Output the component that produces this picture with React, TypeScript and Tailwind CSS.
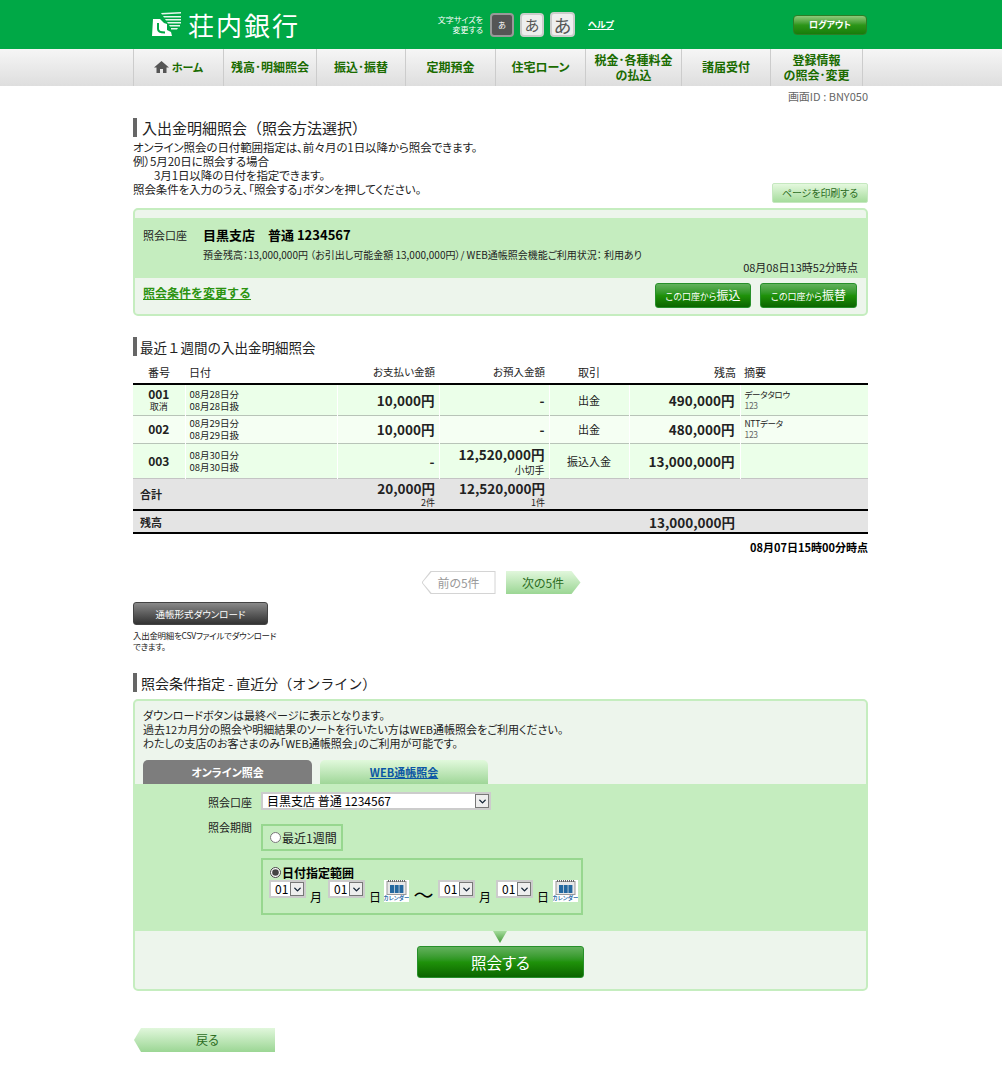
import { ReactNode } from "react";
import { ChevronDown } from "lucide-react";

const navItems = [
  { label: "残高･明細照会", w: "w-[93px]" },
  { label: "振込･振替", w: "w-[89px]" },
  { label: "定期預金", w: "w-[90px]" },
  { label: "住宅ローン", w: "w-[90px]" },
  { label: "税金･各種料金\nの払込", w: "w-[96px]" },
  { label: "諸届受付", w: "w-[89px]" },
  { label: "登録情報\nの照会･変更", w: "w-[92px]" },
];

const cellLine = "border-r border-white";

function Logo() {
  return (
    <svg width="30" height="25" viewBox="0 0 30 25" className="shrink-0">
      <path d="M9 1l20-1v1.5L10 2.5zM11 4h18v1.5H12zM13 7h16v1.5H14zM15 10h14v1.5H16zM17 13h11v1.5H18zM19 16h7l-1 1.5h-6z" fill="#fff" opacity="0.9" />
      <path d="M1 7h7l4 4 3 1v6l4 2 1 4H0z" fill="#fff" />
      <path d="M6 11v6c0 3 3 3.5 7 3.5" fill="none" stroke="#00a846" strokeWidth="2" />
    </svg>
  );
}

function HomeIcon() {
  return (
    <svg width="15" height="12" viewBox="0 0 15 12" className="shrink-0">
      <path d="M7.5 0L15 6.5H12.5V12H9V8H6V12H2.5V6.5H0Z" fill="#555" />
    </svg>
  );
}

function Heading({ children, size }: { children: ReactNode; size: string }) {
  return (
    <div className={`flex h-[19px] items-center border-l-[4px] border-[#666] ${size} text-[#222] [font-feature-settings:normal]`}>
      {children}
    </div>
  );
}

function SmallSelect() {
  return (
    <span className="flex h-[18px] w-[37px] items-center justify-between border-2 border-[#cccccc] bg-white pl-1 text-[12px] leading-none text-black">
      01
      <span className="flex h-[14px] w-[14px] items-center justify-center border border-[#777] bg-[#eeeeee]">
        <ChevronDown size={11} strokeWidth={3} className="text-[#123]" />
      </span>
    </span>
  );
}

function CalendarIcon() {
  return (
    <span className="flex h-[22px] w-[25px] flex-col items-center overflow-hidden bg-white">
      <svg width="21" height="15" viewBox="0 0 21 15" className="shrink-0">
        <rect x="1" y="1.5" width="19" height="13" fill="#e8e8e8" stroke="#999" />
        <path d="M2 1h17" stroke="#666" strokeWidth="2" strokeDasharray="1 1" />
        <rect x="4" y="5" width="4" height="8" fill="#24689f" />
        <rect x="8.7" y="5" width="4" height="8" fill="#24689f" />
        <rect x="13.4" y="5" width="4" height="8" fill="#24689f" />
      </svg>
      <span className="text-[5.5px] leading-[7px] font-bold whitespace-nowrap text-[#2b6ca8]">カレンダー</span>
    </span>
  );
}

function GreenButton({ children, className }: { children: ReactNode; className: string }) {
  return (
    <button className={`rounded-[3px] border border-[#27902a] bg-gradient-to-b from-[#62b15c] via-[#1f920a] to-[#0b6500] text-white ${className}`}>
      {children}
    </button>
  );
}

export default function App() {
  return (
    <div className="h-[1065px] w-[1002px] bg-white text-[12px] leading-[14px] text-[#222] [font-family:'Noto_Sans_CJK_JP','Liberation_Sans',sans-serif] [font-feature-settings:'palt']">
      <header className="h-[49px] bg-[#00a846]">
        <div className="ml-[133px] flex h-full w-[735px] items-center">
          <div className="ml-[19px] flex w-[281px] items-center gap-[6px] text-white">
            <Logo />
            <span className="text-[26px] leading-none tracking-[2px]">荘内銀行</span>
          </div>
          <div className="w-[50px] text-right text-[8px] leading-[10px] whitespace-nowrap text-white">
            文字サイズを<br />変更する
          </div>
          <div className="ml-[7px] flex items-center gap-[6px]">
            <span className="flex h-[24px] w-[24px] items-center justify-center rounded-[4px] border-2 border-[#999] bg-[#555] text-[8px] text-white">あ</span>
            <span className="flex h-[24px] w-[24px] items-center justify-center rounded-[4px] border-2 border-[#ccc] bg-[#eee] text-[15px] text-[#555]">あ</span>
            <span className="flex h-[25px] w-[25px] items-center justify-center rounded-[4px] border-2 border-[#ccc] bg-[#eee] text-[18px] text-[#555]">あ</span>
          </div>
          <a className="ml-[13px] text-[9px] font-bold text-white underline">ヘルプ</a>
          <button className="mr-[1px] ml-auto h-[20px] w-[74px] rounded-[4px] border border-[#2d7d25] bg-gradient-to-b from-[#8fc97a] via-[#2c9618] to-[#167d0a] text-[9px] font-bold text-white">
            ログアウト
          </button>
        </div>
      </header>

      <nav className="h-[37px] bg-gradient-to-b from-[#f6f6f6] to-[#dedede]">
        <div className="ml-[133px] flex h-full w-[735px] border-l border-[#ccc]">
          <div className="flex w-[90px] items-center justify-center gap-[3px] border-r border-[#ccc] pb-[2px] text-[11px] font-bold text-[#1a6b00]">
            <HomeIcon />
            ホーム
          </div>
          {navItems.map((n) => (
            <div key={n.label} className={`flex ${n.w} items-center justify-center border-r border-[#ccc] pb-[2px] text-center text-[12px] leading-[15px] font-bold whitespace-pre-line text-[#1a6b00]`}>
              {n.label}
            </div>
          ))}
        </div>
      </nav>

      <main className="ml-[133px] w-[735px]">
        <p className="mt-[4px] h-[12px] text-right text-[11px] leading-[12px] text-[#666] [font-feature-settings:normal]">画面ID : BNY050</p>

        <div className="mt-[16px]">
          <Heading size="pl-[5px] text-[15px]">入出金明細照会（照会方法選択）</Heading>
        </div>

        <div className="relative mt-[3px] h-[56px] text-[11.5px] tracking-[-0.1px]">
          <p>オンライン照会の日付範囲指定は、前々月の1日以降から照会できます。</p>
          <p>例）5月20日に照会する場合</p>
          <p className="pl-[21px]">3月1日以降の日付を指定できます。</p>
          <p>照会条件を入力のうえ、「照会する」ボタンを押してください。</p>
          <button className="absolute right-0 bottom-[-7px] h-[20px] w-[96px] rounded-[2px] border border-[#c5e8bf] bg-gradient-to-b from-[#e4f8de] to-[#a5dc9c] text-[10px] text-[#2c6d1f]">
            ページを印刷する
          </button>
        </div>

        <section className="mt-[12px] h-[108px] overflow-hidden rounded-[5px] border-2 border-[#c5edbf] bg-[#edf5ec]">
          <div className="mt-[8px] h-[60px] bg-[#c5edbf] pt-[10px] pl-[8px]">
            <div className="flex items-center">
              <span className="w-[60px] text-[11px]">照会口座</span>
              <span className="text-[13px] font-bold text-black">目黒支店　普通 1234567</span>
            </div>
            <p className="mt-[7px] pl-[60px] text-[10px] leading-[12px]">預金残高：13,000,000円 （お引出し可能金額 13,000,000円）/ WEB通帳照会機能ご利用状況： 利用あり</p>
            <p className="pr-[8px] text-right text-[11px] leading-[13px]">08月08日13時52分時点</p>
          </div>
          <div className="flex items-center justify-between pr-[9px] pl-[8px]">
            <a className="text-[12px] font-bold text-[#2b9310] underline [font-feature-settings:normal]">照会条件を変更する</a>
            <div className="mt-[5px] flex gap-[9px]">
              <GreenButton className="h-[25px] w-[96px] text-[9px]">この口座から<span className="text-[12px]">振込</span></GreenButton>
              <GreenButton className="h-[25px] w-[97px] text-[9px]">この口座から<span className="text-[12px]">振替</span></GreenButton>
            </div>
          </div>
        </section>

        <div className="mt-[21px]">
          <Heading size="pl-[3px] text-[13.5px]">最近１週間の入出金明細照会</Heading>
        </div>

        <table className="mt-[6px] w-[735px] table-fixed border-collapse text-[11px]">
          <colgroup>
            <col className="w-[52px]" />
            <col className="w-[152px]" />
            <col className="w-[102px]" />
            <col className="w-[110px]" />
            <col className="w-[80px]" />
            <col className="w-[111px]" />
            <col className="w-[128px]" />
          </colgroup>
          <thead>
            <tr className="h-[22px] border-b-2 border-black">
              <th className="pb-[2px] text-center font-normal">番号</th>
              <th className="pb-[2px] pl-[4px] text-left font-normal">日付</th>
              <th className="pr-[4px] pb-[2px] text-right text-[10.5px] font-normal">お支払い金額</th>
              <th className="pr-[4px] pb-[2px] text-right text-[10.5px] font-normal">お預入金額</th>
              <th className="pb-[2px] text-center font-normal">取引</th>
              <th className="pr-[4px] pb-[2px] text-right font-normal">残高</th>
              <th className="pb-[2px] pl-[4px] text-left font-normal">摘要</th>
            </tr>
          </thead>
          <tbody>
            <tr className="h-[31px] border-b border-[#b8c4b8] bg-[#ebffe9]">
              <td className={`${cellLine} text-center`}><b className="block text-[12px] leading-[14px]">001</b><span className="block text-[9px] leading-[11px]">取消</span></td>
              <td className={`${cellLine} pl-[4px] text-[9.5px] leading-[12px]`}>08月28日分<br />08月28日扱</td>
              <td className={`${cellLine} pr-[4px] text-right text-[13.5px] font-bold`}>10,000円</td>
              <td className={`${cellLine} pr-[4px] text-right text-[13.5px] font-bold`}>-</td>
              <td className={`${cellLine} text-center`}>出金</td>
              <td className={`${cellLine} pr-[5px] text-right text-[13.5px] font-bold`}>490,000円</td>
              <td className="pl-[4px] text-[8.5px] leading-[11px] tracking-[-0.3px]">データタロウ<br /><span className="text-[#666]">123</span></td>
            </tr>
            <tr className="h-[28px] border-b border-[#b8c4b8] bg-[#f5fff3]">
              <td className={`${cellLine} text-center text-[12px] font-bold`}>002</td>
              <td className={`${cellLine} pl-[4px] text-[9.5px] leading-[12px]`}>08月29日分<br />08月29日扱</td>
              <td className={`${cellLine} pr-[4px] text-right text-[13.5px] font-bold`}>10,000円</td>
              <td className={`${cellLine} pr-[4px] text-right text-[13.5px] font-bold`}>-</td>
              <td className={`${cellLine} text-center`}>出金</td>
              <td className={`${cellLine} pr-[5px] text-right text-[13.5px] font-bold`}>480,000円</td>
              <td className="pl-[4px] text-[8.5px] leading-[11px] tracking-[-0.3px]">NTTデータ<br /><span className="text-[#666]">123</span></td>
            </tr>
            <tr className="h-[35px] border-b border-[#c4c4c4] bg-[#ebffe9]">
              <td className={`${cellLine} text-center text-[12px] font-bold`}>003</td>
              <td className={`${cellLine} pl-[4px] text-[9.5px] leading-[12px]`}>08月30日分<br />08月30日扱</td>
              <td className={`${cellLine} pr-[4px] text-right text-[13.5px] font-bold`}>-</td>
              <td className={`${cellLine} pr-[4px] text-right`}><b className="block text-[13.5px] leading-[17px]">12,520,000円</b><span className="block text-[10px] leading-[13px]">小切手</span></td>
              <td className={`${cellLine} text-center`}>振込入金</td>
              <td className={`${cellLine} pr-[5px] text-right text-[13.5px] font-bold`}>13,000,000円</td>
              <td />
            </tr>
            <tr className="h-[32px] border-b-2 border-black bg-[#e4e4e4]">
              <td className="pl-[7px] font-bold" colSpan={2}>合計</td>
              <td className="pr-[4px] text-right"><b className="block text-[13.5px] leading-[17px]">20,000円</b><span className="block text-[9px] leading-[11px]">2件</span></td>
              <td className="pr-[4px] text-right"><b className="block text-[13.5px] leading-[17px]">12,520,000円</b><span className="block text-[9px] leading-[11px]">1件</span></td>
              <td colSpan={3} />
            </tr>
            <tr className="h-[23px] border-b-2 border-black bg-[#e4e4e4]">
              <td className="pl-[7px] font-bold" colSpan={2}>残高</td>
              <td colSpan={3} />
              <td className="pr-[5px] text-right text-[13.5px] font-bold">13,000,000円</td>
              <td />
            </tr>
          </tbody>
        </table>

        <p className="mt-[6px] text-right text-[11px] font-bold text-black">08月07日15時00分時点</p>

        <div className="mt-[17px] flex justify-center gap-[10px] pl-[1px]">
          <div className="h-[23px] w-[74px] bg-[#d4d4d4] p-px [clip-path:polygon(9px_0,100%_0,100%_100%,9px_100%,0_50%)]">
            <div className="flex h-full items-center justify-center bg-white text-[12px] text-[#999] [clip-path:polygon(9px_0,100%_0,100%_100%,9px_100%,0_50%)]">前の5件</div>
          </div>
          <div className="flex h-[23px] w-[75px] items-center justify-center bg-gradient-to-b from-[#e1f7dc] to-[#9bd694] text-[12px] text-[#2c6d1f] [clip-path:polygon(0_0,calc(100%-9px)_0,100%_50%,calc(100%-9px)_100%,0_100%)]">次の5件</div>
        </div>

        <button className="mt-[8px] block h-[23px] w-[135px] rounded-[3px] border border-[#444] bg-gradient-to-b from-[#8a8a8a] to-[#333] text-[9.5px] text-white">
          通帳形式ダウンロード
        </button>
        <p className="mt-[5px] text-[8.5px] leading-[11px] tracking-[-0.3px] whitespace-nowrap">入出金明細をCSVファイルでダウンロード<br />できます。</p>

        <div className="mt-[21px]">
          <Heading size="pl-[4px] text-[14px]">照会条件指定 - 直近分（オンライン）</Heading>
        </div>

        <section className="mt-[7px] h-[292px] overflow-hidden rounded-[5px] border-2 border-[#c5edbf] bg-[#edf5ec]">
          <div className="px-[8px] pt-[7px] text-[11px]">
            <p>ダウンロードボタンは最終ページに表示となります。</p>
            <p>過去12カ月分の照会や明細結果のソートを行いたい方はWEB通帳照会をご利用ください。</p>
            <p>わたしの支店のお客さまのみ「WEB通帳照会」のご利用が可能です。</p>
          </div>
          <div className="mt-[10px] flex gap-[8px] px-[8px]">
            <div className="flex h-[24px] w-[169px] items-center justify-center rounded-t-[5px] bg-[#7d7d7d] text-[11px] font-bold text-white">オンライン照会</div>
            <div className="flex h-[24px] w-[168px] items-center justify-center rounded-t-[5px] bg-gradient-to-b from-[#e1f9dc] to-[#9fd698] text-[11px] font-bold text-[#0b56a5] underline">WEB通帳照会</div>
          </div>

          <div className="h-[147px] bg-[#c5edbf] pt-[8px]">
            <div className="flex items-start">
              <span className="w-[117px] pt-[3px] text-right text-[11px]">照会口座</span>
              <span className="ml-[9px] flex h-[18px] w-[230px] items-center justify-between border-2 border-[#cccccc] bg-white pl-[4px] text-[12px] leading-none text-black">
                目黒支店 普通 1234567
                <span className="flex h-[14px] w-[14px] items-center justify-center border border-[#777] bg-[#eeeeee]">
                  <ChevronDown size={11} strokeWidth={3} className="text-[#123]" />
                </span>
              </span>
            </div>
            <div className="mt-[8px] flex items-start">
              <span className="w-[117px] pt-[2px] text-right text-[11px]">照会期間</span>
              <div className="ml-[9px]">
                <label className="mt-[6px] flex h-[27px] w-[82px] items-center gap-[1px] border-2 border-[#97d78f] pl-[7px] text-[12px]">
                  <input type="radio" name="period" className="h-[11px] w-[11px] accent-[#444]" />
                  最近1週間
                </label>
                <div className="mt-[7px] h-[57px] w-[322px] border-2 border-[#97d78f] pt-[4px] pl-[6px]">
                  <label className="ml-[1px] flex h-[16px] items-center gap-[1px] text-[12px] leading-[13px] font-bold text-black">
                    <input type="radio" name="period" defaultChecked className="h-[11px] w-[11px] accent-[#444]" />
                    日付指定範囲
                  </label>
                  <div className="flex items-start">
                    <SmallSelect />
                    <span className="mt-[10px] ml-[4px] w-[18px] text-[12px] text-black">月</span>
                    <SmallSelect />
                    <span className="mt-[10px] ml-[4px] w-[15px] text-[12px] text-black">日</span>
                    <CalendarIcon />
                    <span className="mt-[4px] w-[29px] text-center text-[20px] leading-[22px] text-black">～</span>
                    <SmallSelect />
                    <span className="mt-[10px] ml-[4px] w-[17px] text-[12px] text-black">月</span>
                    <SmallSelect />
                    <span className="mt-[10px] ml-[4px] w-[16px] text-[12px] text-black">日</span>
                    <CalendarIcon />
                  </div>
                </div>
              </div>
            </div>
          </div>

          <div className="relative flex justify-center pt-[15px]">
            <span className="absolute top-0 left-[358px] h-[12px] w-[14px] bg-gradient-to-b from-[#a5dc9c] to-[#3f9a33] [clip-path:polygon(0_0,100%_0,50%_100%)]" />
            <GreenButton className="h-[32px] w-[167px] text-[15.5px]">照会する</GreenButton>
          </div>
        </section>

        <button className="mt-[37px] ml-[1px] block h-[24px] w-[141px] bg-gradient-to-b from-[#e1f7dc] to-[#9bd694] pl-[6px] text-[12px] text-[#2c6d1f] [clip-path:polygon(7px_0,100%_0,100%_100%,7px_100%,0_50%)]">
          戻る
        </button>
      </main>
    </div>
  );
}
